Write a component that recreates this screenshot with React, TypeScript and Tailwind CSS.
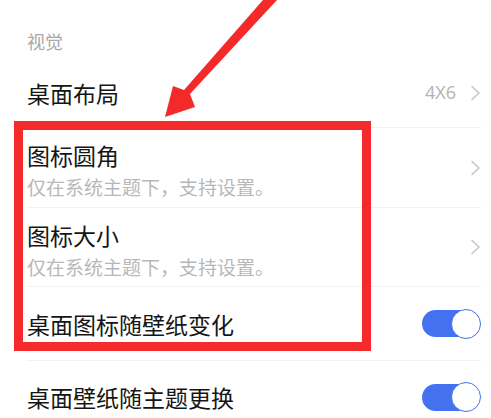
const Chevron = () => (
  <svg width="11" height="16" viewBox="0 0 11 16" className="shrink-0">
    <polyline points="2,1.5 9,8 2,14.5" fill="none" stroke="#c6c6c6" strokeWidth="1.6" strokeLinejoin="round" strokeLinecap="round" />
  </svg>
);

const Toggle = () => (
  <div className="relative w-[59px] h-[30px] flex items-center">
    <div className="h-[27px] w-[57px] rounded-full bg-[#4472ef]" />
    <div className="absolute right-0 top-0 w-[30px] h-[30px] rounded-full bg-white border-[1.5px] border-[#4472ef]" />
  </div>
);

const SubRow = ({ title, h }: { title: string; h: string }) => (
  <div className={`flex items-start justify-between border-b border-[#f2f2f2] ${h}`}>
    <div className="flex flex-col pt-[12px]">
      <span className="text-[23px] leading-[30px] text-[#151515]">{title}</span>
      <span className="mt-[5px] text-[19px] leading-[24px] text-[#b8b8b8]">仅在系统主题下，支持设置。</span>
    </div>
    <div className="self-center">
      <Chevron />
    </div>
  </div>
);

export default function App() {
  return (
    <div
      className="relative w-[491px] h-[418px] overflow-hidden bg-white pl-[27px] pr-[10px]"
      style={{ fontFamily: '"Noto Sans CJK SC", "Noto Sans", sans-serif' }}
    >
      <div className="pt-[29px] pb-[5px] text-[18px] leading-[24px] text-[#a8a8a8]">视觉</div>

      <div className="flex items-center justify-between h-[70px] border-b border-[#f2f2f2]">
        <span className="text-[23px] leading-[30px] text-[#151515]">桌面布局</span>
        <div className="flex items-center gap-[14px]">
          <span className="text-[18px] text-[#b3b3b3]" style={{ fontFamily: '"Open Sans", sans-serif' }}>4X6</span>
          <Chevron />
        </div>
      </div>

      <SubRow title="图标圆角" h="h-[80px]" />
      <SubRow title="图标大小" h="h-[79px]" />

      <div className="flex items-center justify-between h-[74px] border-b border-[#f2f2f2]">
        <span className="text-[23px] leading-[30px] text-[#151515]">桌面图标随壁纸变化</span>
        <Toggle />
      </div>

      <div className="flex items-center justify-between h-[72px]">
        <span className="text-[23px] leading-[30px] text-[#151515]">桌面壁纸随主题更换</span>
        <Toggle />
      </div>

      <div className="absolute left-[14px] top-[121px] w-[357px] h-[230px] border-[9px] border-[#f52a2a]" />

      <svg className="absolute left-0 top-0" width="491" height="418" viewBox="0 0 491 418">
        <polygon
          points="263,0 277,0 190,94 195,107 165,117 173,86 184,90"
          fill="#f42a2a"
        />
      </svg>
    </div>
  );
}
